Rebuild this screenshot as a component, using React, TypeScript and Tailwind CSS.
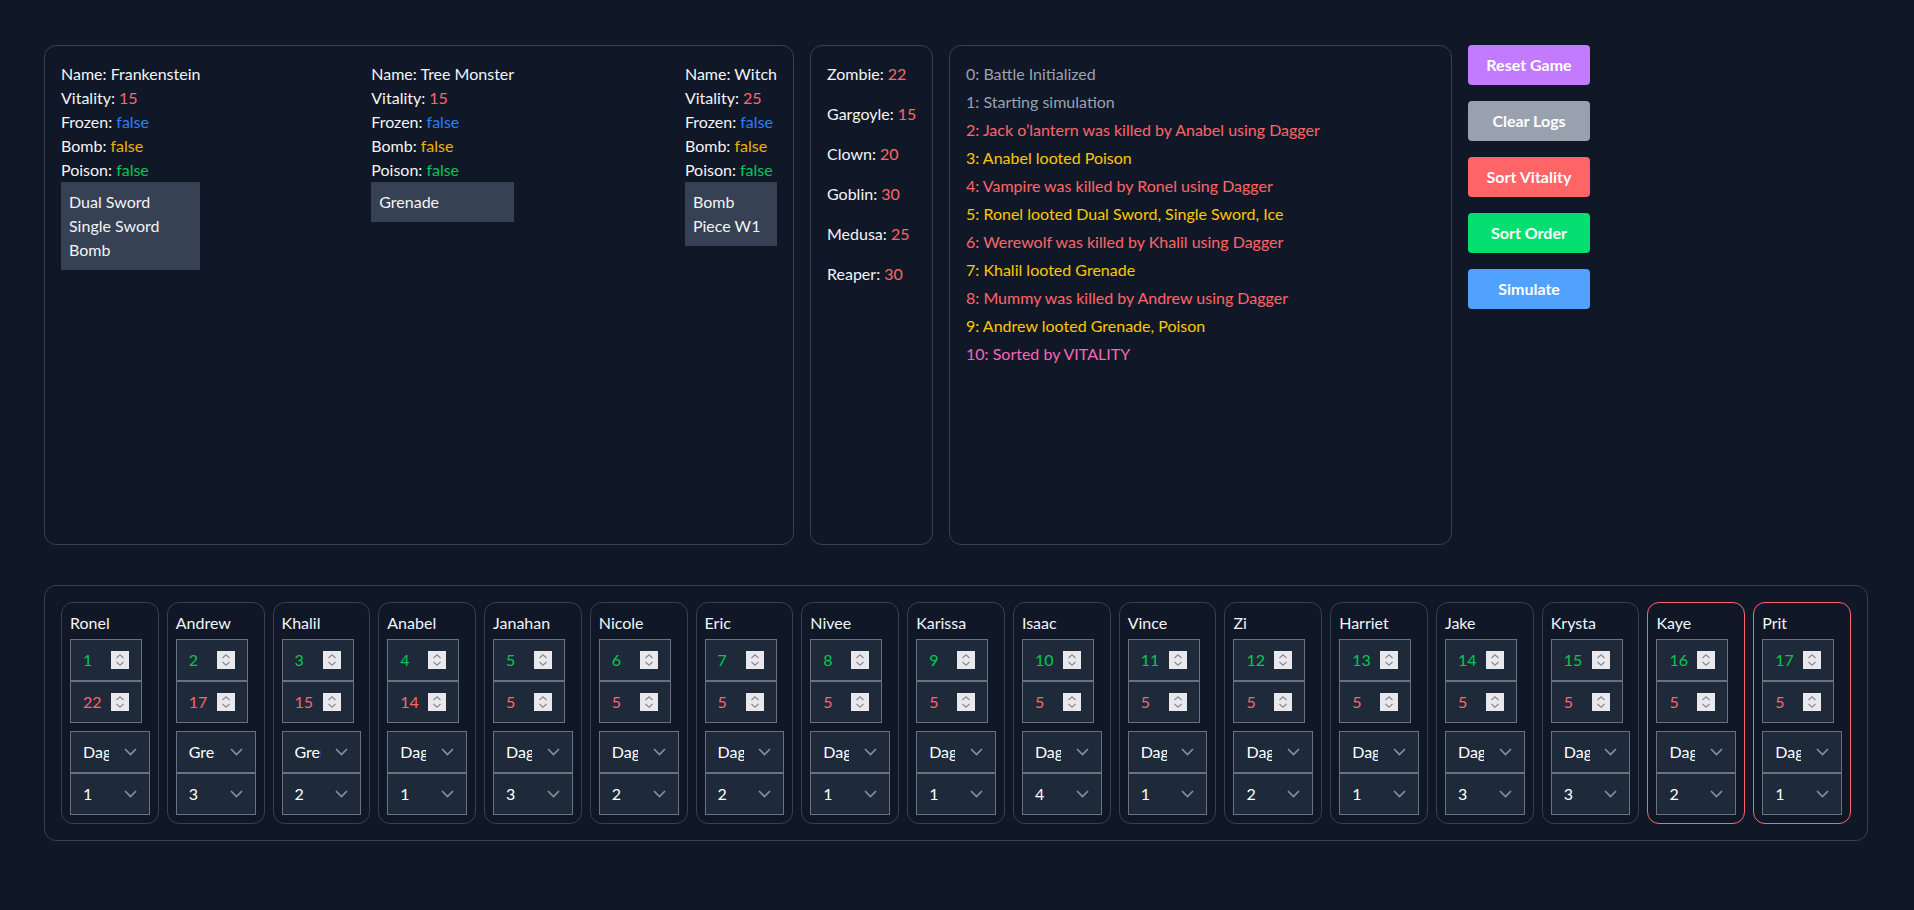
import React from "react";

type Monster = {
  name: string;
  vitality: number;
  frozen: boolean;
  bomb: boolean;
  poison: boolean;
  items: string[];
};

const board: Monster[] = [
  { name: "Frankenstein", vitality: 15, frozen: false, bomb: false, poison: false, items: ["Dual Sword", "Single Sword", "Bomb"] },
  { name: "Tree Monster", vitality: 15, frozen: false, bomb: false, poison: false, items: ["Grenade"] },
  { name: "Witch", vitality: 25, frozen: false, bomb: false, poison: false, items: ["Bomb", "Piece W1"] },
];

const queue = [
  { name: "Zombie", vitality: 22 },
  { name: "Gargoyle", vitality: 15 },
  { name: "Clown", vitality: 20 },
  { name: "Goblin", vitality: 30 },
  { name: "Medusa", vitality: 25 },
  { name: "Reaper", vitality: 30 },
];

type Log = { text: string; kind: "info" | "kill" | "loot" | "sort" };

const logs: Log[] = [
  { text: "Battle Initialized", kind: "info" },
  { text: "Starting simulation", kind: "info" },
  { text: "Jack o\u2019lantern was killed by Anabel using Dagger", kind: "kill" },
  { text: "Anabel looted Poison", kind: "loot" },
  { text: "Vampire was killed by Ronel using Dagger", kind: "kill" },
  { text: "Ronel looted Dual Sword, Single Sword, Ice", kind: "loot" },
  { text: "Werewolf was killed by Khalil using Dagger", kind: "kill" },
  { text: "Khalil looted Grenade", kind: "loot" },
  { text: "Mummy was killed by Andrew using Dagger", kind: "kill" },
  { text: "Andrew looted Grenade, Poison", kind: "loot" },
  { text: "Sorted by VITALITY", kind: "sort" },
];

const logColor: Record<Log["kind"], string> = {
  info: "text-gray-400",
  kill: "text-red-400",
  loot: "text-yellow-400",
  sort: "text-pink-400",
};

type Player = { name: string; order: number; vitality: number; weapon: string; target: number; out?: boolean };

const players: Player[] = [
  { name: "Ronel", order: 1, vitality: 22, weapon: "Dagger", target: 1 },
  { name: "Andrew", order: 2, vitality: 17, weapon: "Grenade", target: 3 },
  { name: "Khalil", order: 3, vitality: 15, weapon: "Grenade", target: 2 },
  { name: "Anabel", order: 4, vitality: 14, weapon: "Dagger", target: 1 },
  { name: "Janahan", order: 5, vitality: 5, weapon: "Dagger", target: 3 },
  { name: "Nicole", order: 6, vitality: 5, weapon: "Dagger", target: 2 },
  { name: "Eric", order: 7, vitality: 5, weapon: "Dagger", target: 2 },
  { name: "Nivee", order: 8, vitality: 5, weapon: "Dagger", target: 1 },
  { name: "Karissa", order: 9, vitality: 5, weapon: "Dagger", target: 1 },
  { name: "Isaac", order: 10, vitality: 5, weapon: "Dagger", target: 4 },
  { name: "Vince", order: 11, vitality: 5, weapon: "Dagger", target: 1 },
  { name: "Zi", order: 12, vitality: 5, weapon: "Dagger", target: 2 },
  { name: "Harriet", order: 13, vitality: 5, weapon: "Dagger", target: 1 },
  { name: "Jake", order: 14, vitality: 5, weapon: "Dagger", target: 3 },
  { name: "Krysta", order: 15, vitality: 5, weapon: "Dagger", target: 3 },
  { name: "Kaye", order: 16, vitality: 5, weapon: "Dagger", target: 2, out: true },
  { name: "Prit", order: 17, vitality: 5, weapon: "Dagger", target: 1, out: true },
];

const buttons = [
  { label: "Reset Game", cls: "bg-purple-400" },
  { label: "Clear Logs", cls: "bg-gray-400" },
  { label: "Sort Vitality", cls: "bg-red-400" },
  { label: "Sort Order", cls: "bg-green-400" },
  { label: "Simulate", cls: "bg-blue-400" },
];

function Spinner() {
  return (
    <span className="flex h-[18px] w-[18px] items-center justify-center bg-[#e9e8ed]">
      <svg width="10" height="14" viewBox="0 0 10 14" fill="none" stroke="#8a8a90" strokeWidth="1.2">
        <path d="M1.5 5 L5 1.8 L8.5 5" />
        <path d="M1.5 9 L5 12.2 L8.5 9" />
      </svg>
    </span>
  );
}

function NumberBox({ value, color }: { value: number; color: string }) {
  return (
    <div className="flex h-[42px] w-18 items-center justify-between border border-gray-500 bg-gray-800 px-3">
      <span className={color}>{value}</span>
      <Spinner />
    </div>
  );
}

function SelectBox({ value }: { value: string }) {
  return (
    <div className="flex h-[42px] w-full items-center border border-gray-500 bg-gray-800 px-3 text-white">
      <span className="w-[26px] overflow-hidden whitespace-nowrap">{value}</span>
      <svg className="ml-auto" width="13" height="8" viewBox="0 0 13 8" fill="none" stroke="#8b909a" strokeWidth="1.6">
        <path d="M1 1 L6.5 6.5 L12 1" />
      </svg>
    </div>
  );
}

function PlayerCard({ p }: { p: Player }) {
  return (
    <div
      className={
        p.out
          ? "flex flex-1 flex-col rounded-xl border border-red-400 p-2"
          : "flex flex-1 flex-col rounded-xl border border-gray-700 p-2"
      }
    >
      <div className="mb-1 text-gray-100">{p.name}</div>
      <NumberBox value={p.order} color="text-green-500" />
      <NumberBox value={p.vitality} color="text-red-400" />
      <div className="mt-2">
        <SelectBox value={p.weapon} />
        <SelectBox value={String(p.target)} />
      </div>
    </div>
  );
}

export default function App() {
  return (
    <div className="min-h-screen bg-gray-900 pl-[44px] pr-[46px] pt-[45px] font-['Lato','Open_Sans',sans-serif] text-base text-gray-100">
      <div className="flex items-start gap-4">
        <div className="flex h-[500px] w-[750px] items-start justify-between rounded-xl border border-gray-700 p-4">
          {board.map((m) => (
            <div key={m.name} className="flex flex-col">
              <div>Name: {m.name}</div>
              <div>
                Vitality: <span className="text-red-400">{m.vitality}</span>
              </div>
              <div>
                Frozen: <span className="text-blue-500">{String(m.frozen)}</span>
              </div>
              <div>
                Bomb: <span className="text-yellow-500">{String(m.bomb)}</span>
              </div>
              <div>
                Poison: <span className="text-green-500">{String(m.poison)}</span>
              </div>
              <div className="bg-gray-700 px-2 py-2">
                {m.items.map((it) => (
                  <div key={it}>{it}</div>
                ))}
              </div>
            </div>
          ))}
        </div>

        <div className="flex h-[500px] w-[123px] flex-col gap-4 rounded-xl border border-gray-700 p-4">
          {queue.map((q) => (
            <div key={q.name} className="whitespace-nowrap">
              {q.name}: <span className="text-red-400">{q.vitality}</span>
            </div>
          ))}
        </div>

        <div className="flex h-[500px] w-[503px] flex-col gap-1 rounded-xl border border-gray-700 p-4">
          {logs.map((l, i) => (
            <div key={i} className={logColor[l.kind]}>
              {i}: {l.text}
            </div>
          ))}
        </div>

        <div className="flex flex-col gap-4">
          {buttons.map((b) => (
            <button key={b.label} className={`h-10 w-[122px] rounded font-bold text-white ${b.cls}`}>
              {b.label}
            </button>
          ))}
        </div>
      </div>

      <div className="mt-10 flex gap-2 rounded-xl border border-gray-700 p-4">
        {players.map((p) => (
          <PlayerCard key={p.name} p={p} />
        ))}
      </div>
    </div>
  );
}
